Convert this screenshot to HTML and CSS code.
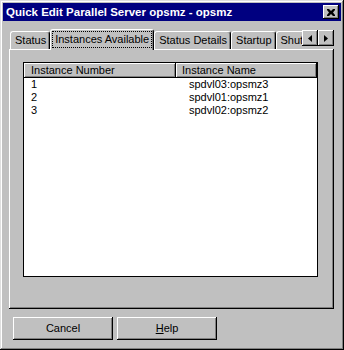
FILE: index.html
```html
<!doctype html>
<html lang="en">
<head>
    <meta charset="utf-8">
    <title>Quick Edit Parallel Server</title>
    <link rel="stylesheet" href="styles.css">
</head>
<body>

    <div class="window">
        <div class="titlebar">
            <span class="title">Quick Edit Parallel Server opsmz - opsmz</span>
            <span class="close-btn">
                <svg width="8" height="7" viewBox="0 0 8 7"><path d="M0 0h2l2 2 2-2h2v1l-2 2.5 2 2.5v1h-2l-2-2-2 2h-2v-1l2-2.5-2-2.5z" fill="#000"/></svg>
            </span>
        </div>

        <div class="tabs-row">
            <div class="tabstrip">
                <div class="tab">Status</div>
                <div class="tab active"><span class="focus">Instances Available</span></div>
                <div class="tab">Status Details</div>
                <div class="tab">Startup</div>
                <div class="tab">Shutdown</div>
            </div>
            <div class="scroll-arrows">
                <span class="arrow-btn"><svg width="4" height="7" viewBox="0 0 4 7"><path d="M4 0v7L0 3.5z" fill="#000"/></svg></span>
                <span class="arrow-btn"><svg width="4" height="7" viewBox="0 0 4 7"><path d="M0 0v7l4-3.5z" fill="#000"/></svg></span>
            </div>
        </div>

        <div class="panel">
            <div class="listview">
                <div class="list-header">
                    <div class="col col-num">Instance Number</div>
                    <div class="col col-name">Instance Name</div>
                </div>
                <div class="list-row">
                    <div class="cell col-num">1</div>
                    <div class="cell col-name">spdvl03:opsmz3</div>
                </div>
                <div class="list-row">
                    <div class="cell col-num">2</div>
                    <div class="cell col-name">spdvl01:opsmz1</div>
                </div>
                <div class="list-row">
                    <div class="cell col-num">3</div>
                    <div class="cell col-name">spdvl02:opsmz2</div>
                </div>
            </div>
        </div>

        <div class="buttons">
            <div class="btn">Cancel</div>
            <div class="btn"><u>H</u>elp</div>
        </div>
    </div>

</body>
</html>
```

FILE: styles.css
```css
body {
    margin: 0;
    background: #c0c0c0;
    font-family: "Liberation Sans", Arial, sans-serif;
    font-size: 11px;
    color: #000;
}

.window {
    box-sizing: border-box;
    width: 344px;
    height: 350px;
    padding: 3px;
    display: flex;
    flex-direction: column;
    box-shadow: inset -1px -1px #000, inset 1px 1px #dfdfdf, inset -2px -2px #808080, inset 2px 2px #fff;
}

/* title bar */
.titlebar {
    height: 18px;
    flex-shrink: 0;
    background: #000080;
    color: #fff;
    display: flex;
    align-items: center;
    justify-content: space-between;
    padding: 0 2px 0 3px;
    font-weight: bold;
    font-size: 11.5px;
}

.close-btn {
    box-sizing: border-box;
    width: 16px;
    height: 14px;
    background: #c0c0c0;
    display: flex;
    align-items: center;
    justify-content: center;
    box-shadow: inset -1px -1px #000, inset 1px 1px #fff, inset -2px -2px #808080;
}

/* tabs */
.tabs-row {
    display: flex;
    height: 21px;
    margin: 8px 7px -1px 6px;
    position: relative;
    z-index: 1;
}

.tabstrip {
    flex: 1;
    display: flex;
    align-items: flex-end;
    overflow: hidden;
    padding-left: 1px;
}

.tab {
    box-sizing: border-box;
    flex-shrink: 0;
    height: 18px;
    margin-bottom: 1px;
    padding: 0 3px 0 4px;
    line-height: 16px;
    white-space: nowrap;
    border: 1px solid #fff;
    border-right-color: #000;
    border-bottom: none;
    border-radius: 3px 3px 0 0;
    box-shadow: inset -1px 0 #808080;
}

.tab.active {
    height: 21px;
    margin-bottom: 0;
    padding: 2px 2px 0 2px;
    background: #c0c0c0;
}

.focus {
    display: block;
    padding: 0 2px;
    line-height: 15px;
    outline: 1px dotted #000;
    outline-offset: 0;
}

.scroll-arrows {
    display: flex;
    align-self: flex-start;
    margin-top: 1px;
}

.arrow-btn {
    box-sizing: border-box;
    width: 16px;
    height: 16px;
    display: flex;
    align-items: center;
    justify-content: center;
    box-shadow: inset -1px -1px #000, inset 1px 1px #fff, inset -2px -2px #808080;
}

/* panel & list */
.panel {
    box-sizing: border-box;
    height: 260px;
    flex-shrink: 0;
    margin: 0 7px 0 6px;
    padding: 13px 0 0 14px;
    box-shadow: inset -1px -1px #000, inset 1px 1px #fff, inset -2px -2px #808080;
}

.listview {
    box-sizing: border-box;
    width: 295px;
    height: 215px;
    border: 1px solid #000;
    background: #fff;
}

.list-header {
    display: flex;
    height: 15px;
}

.col {
    box-sizing: border-box;
    height: 15px;
    line-height: 14px;
    background: #c0c0c0;
    box-shadow: inset -1px -1px #000, inset 1px 1px #fff, inset -2px -2px #808080;
}

.col-num {
    width: 152px;
    padding-left: 7px;
}

.col-name {
    flex: 1;
    padding-left: 6px;
}

.list-row {
    display: flex;
    height: 13px;
    line-height: 13px;
}

/* buttons */
.buttons {
    display: flex;
    gap: 4px;
    margin: 8px 0 0 10px;
}

.btn {
    box-sizing: border-box;
    width: 100px;
    height: 23px;
    line-height: 22px;
    text-align: center;
    box-shadow: inset -1px -1px #000, inset 1px 1px #fff, inset -2px -2px #808080;
}
```
